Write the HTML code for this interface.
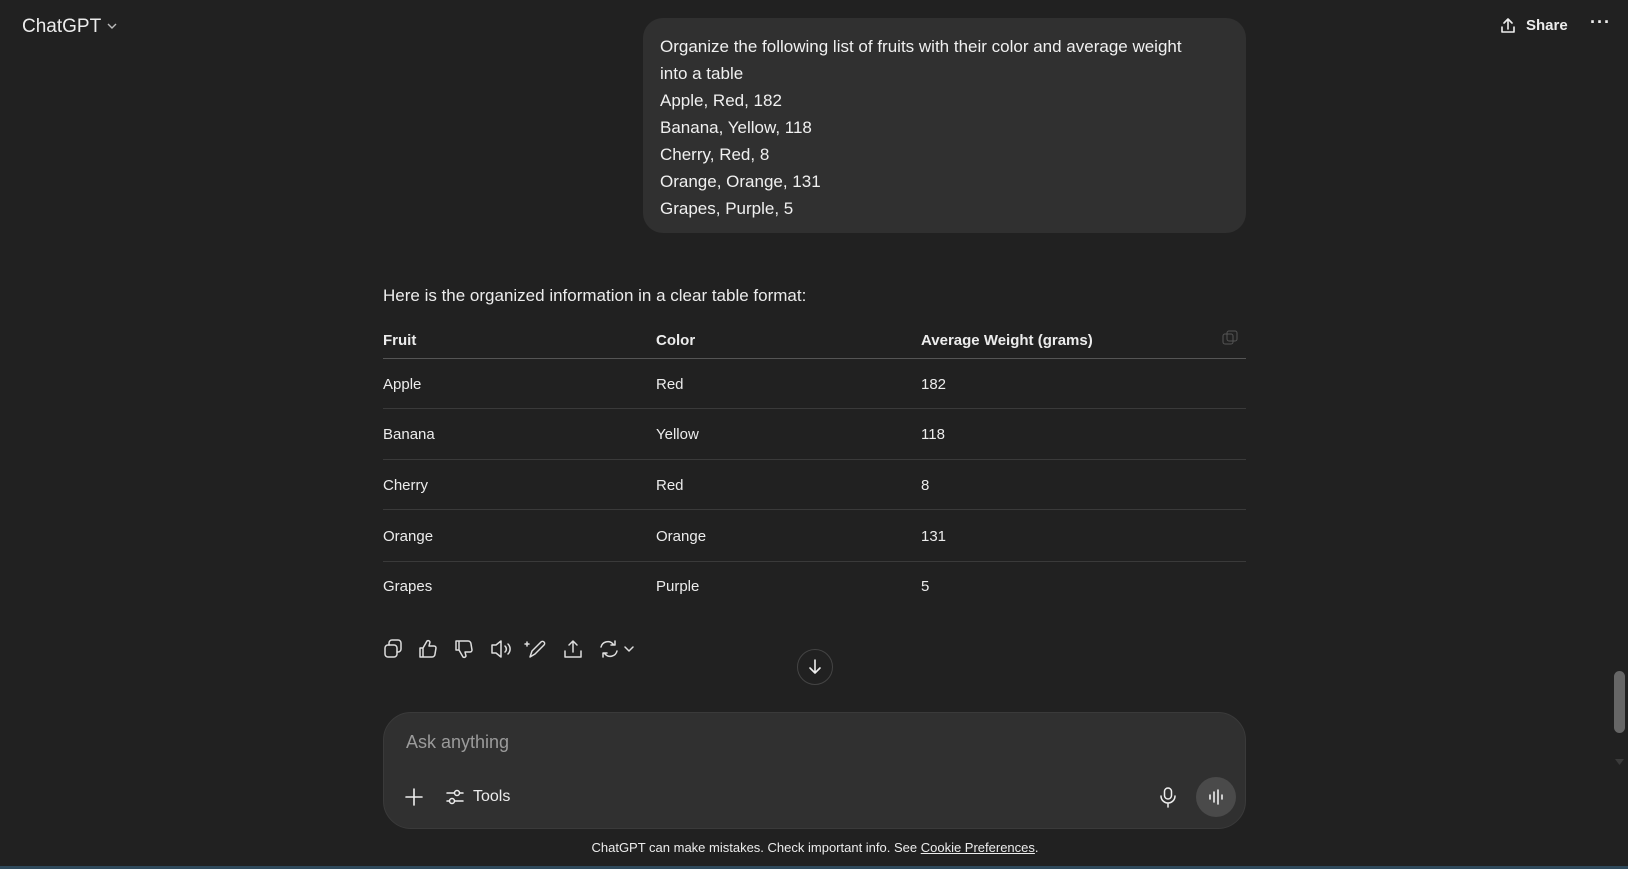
<!DOCTYPE html>
<html><head><meta charset="utf-8"><style>
*{margin:0;padding:0;box-sizing:border-box}
body{width:1628px;height:869px;background:#212121;color:#ececec;font-family:"Liberation Sans",sans-serif;position:relative;overflow:hidden}
.a{position:absolute}
.bubble{left:643px;top:18px;width:603px;height:215px;background:#303030;border-radius:20px;padding:15px 45px 15px 17px;font-size:17px;line-height:27px;color:#f0f0f0}
.t{font-size:15px;color:#ececec}
.b{font-weight:bold}
.line{left:383px;width:863px;height:1px;background:#3a3a3a}
svg{position:absolute}
</style></head><body>
<div class="a" style="left:22px;top:16px;font-size:19px;color:#ececec">ChatGPT</div>
<svg style="left:106px;top:21px" width="12" height="10" viewBox="0 0 12 10"><path d="M2 3l4 4 4-4" stroke="#bbb" stroke-width="1.4" fill="none"/></svg>
<svg style="left:1498px;top:16px" width="20" height="20" viewBox="0 0 20 20"><path d="M10 13V3M6 7l4-4 4 4M4 11v5h12v-5" stroke="#eee" stroke-width="1.6" fill="none" stroke-linecap="round" stroke-linejoin="round"/></svg>
<div class="a b" style="left:1526px;top:17px;font-size:15px;color:#ececec">Share</div>
<div class="a b" style="left:1590px;top:12px;font-size:18px;color:#ececec;letter-spacing:1px">···</div>

<div class="a bubble">Organize the following list of fruits with their color and average weight into a table<br>Apple, Red, 182<br>Banana, Yellow, 118<br>Cherry, Red, 8<br>Orange, Orange, 131<br>Grapes, Purple, 5</div>

<div class="a" style="left:383px;top:286px;font-size:17px">Here is the organized information in a clear table format:</div>

<div class="a t b" style="left:383px;top:332px">Fruit</div>
<div class="a t b" style="left:656px;top:332px">Color</div>
<div class="a t b" style="left:921px;top:332px">Average Weight (grams)</div>
<svg style="left:1222px;top:330px" width="16" height="16" viewBox="0 0 16 16"><rect x="1" y="4" width="10" height="10" rx="2" stroke="#555" fill="none"/><rect x="5" y="1" width="10" height="10" rx="2" stroke="#555" fill="none"/></svg>
<div class="a line" style="top:358px;background:#555"></div>

<div class="a t" style="left:383px;top:376px">Apple</div><div class="a t" style="left:656px;top:376px">Red</div><div class="a t" style="left:921px;top:376px">182</div>
<div class="a line" style="top:408px"></div>
<div class="a t" style="left:383px;top:426px">Banana</div><div class="a t" style="left:656px;top:426px">Yellow</div><div class="a t" style="left:921px;top:426px">118</div>
<div class="a line" style="top:459px"></div>
<div class="a t" style="left:383px;top:477px">Cherry</div><div class="a t" style="left:656px;top:477px">Red</div><div class="a t" style="left:921px;top:477px">8</div>
<div class="a line" style="top:509px"></div>
<div class="a t" style="left:383px;top:528px">Orange</div><div class="a t" style="left:656px;top:528px">Orange</div><div class="a t" style="left:921px;top:528px">131</div>
<div class="a line" style="top:561px"></div>
<div class="a t" style="left:383px;top:578px">Grapes</div><div class="a t" style="left:656px;top:578px">Purple</div><div class="a t" style="left:921px;top:578px">5</div>

<svg style="left:383px;top:638px" width="270" height="22" viewBox="0 0 270 22" fill="none" stroke="#ddd" stroke-width="1.5" stroke-linecap="round" stroke-linejoin="round">
<rect x="2" y="7" width="12" height="12" rx="3"/><path d="M6 7V5a3 3 0 0 1 3-3h6a3 3 0 0 1 3 3v6a3 3 0 0 1-3 3h-1"/>
<path d="M40 19h9a3 3 0 0 0 3-3l1-6a2 2 0 0 0-2-2h-5l1-4a2 2 0 0 0-3-1l-4 7v9zM40 10h-3v9h3"/>
<path d="M76 3h9a3 3 0 0 1 3 3l1 6a2 2 0 0 1-2 2h-5l1 4a2 2 0 0 1-3 1l-4-7V3zM76 12h-3V3h3"/>
<path d="M109 7h4l5-4v16l-5-4h-4zM122 8a4 4 0 0 1 0 6M125 6a7 7 0 0 1 0 10"/>
<path d="M147 19l2-6 9-9a2 2 0 0 1 3 3l-9 9zM144 4v4M142 6h4"/>
<path d="M190 14V3M186 7l4-4 4 4M182 13v6h16v-6"/>
<path d="M218 9a7 7 0 0 1 12-3l1 1M232 3v4h-4M234 13a7 7 0 0 1-12 3l-1-1M220 19v-4h4"/>
<path d="M242 9l4 4 4-4"/>
</svg>

<div class="a" style="left:797px;top:649px;width:36px;height:36px;border-radius:50%;border:1px solid #444;background:#212121"></div>
<svg style="left:805px;top:657px" width="20" height="20" viewBox="0 0 20 20"><path d="M10 3v13M5 11l5 5 5-5" stroke="#eee" stroke-width="1.6" fill="none" stroke-linecap="round" stroke-linejoin="round"/></svg>

<div class="a" style="left:383px;top:712px;width:863px;height:117px;background:#303030;border-radius:28px;border:1px solid #3a3a3a"></div>
<div class="a" style="left:406px;top:732px;font-size:18px;color:#9b9b9b">Ask anything</div>
<svg style="left:404px;top:787px" width="20" height="20" viewBox="0 0 20 20"><path d="M10 2v16M2 10h16" stroke="#eee" stroke-width="1.6" stroke-linecap="round"/></svg>
<svg style="left:445px;top:787px" width="20" height="20" viewBox="0 0 20 20" fill="none" stroke="#eee" stroke-width="1.5" stroke-linecap="round"><path d="M2 6h16M2 14h16"/><circle cx="12" cy="6" r="2.5" fill="#303030"/><circle cx="7" cy="14" r="2.5" fill="#303030"/></svg>
<div class="a" style="left:473px;top:788px;font-size:16px;color:#ececec">Tools</div>
<svg style="left:1158px;top:786px" width="20" height="22" viewBox="0 0 20 22" fill="none" stroke="#eee" stroke-width="1.5" stroke-linecap="round"><rect x="6.5" y="2" width="7" height="11" rx="3.5"/><path d="M3 10a7 7 0 0 0 14 0M10 17v4"/></svg>
<div class="a" style="left:1196px;top:777px;width:40px;height:40px;border-radius:50%;background:#4a4a4a"></div>
<svg style="left:1206px;top:787px" width="20" height="20" viewBox="0 0 20 20" stroke="#eee" stroke-width="1.6" stroke-linecap="round"><path d="M4 8v4M8 5v10M12 3v14M16 8v4"/></svg>

<div class="a" style="left:0;width:1628px;top:840px;text-align:center;font-size:13px;color:#ececec;padding-left:2px">ChatGPT can make mistakes. Check important info. See <span style="text-decoration:underline">Cookie Preferences</span>.</div>
<div class="a" style="left:0;top:866px;width:1628px;height:3px;background:#2f4a5c"></div>
<div class="a" style="left:1614px;top:671px;width:11px;height:62px;border-radius:6px;background:#666"></div>
<svg style="left:1614px;top:758px" width="11" height="8" viewBox="0 0 11 8"><path d="M1 1h9l-4.5 6z" fill="#3a3a3a"/></svg>
</body></html>
